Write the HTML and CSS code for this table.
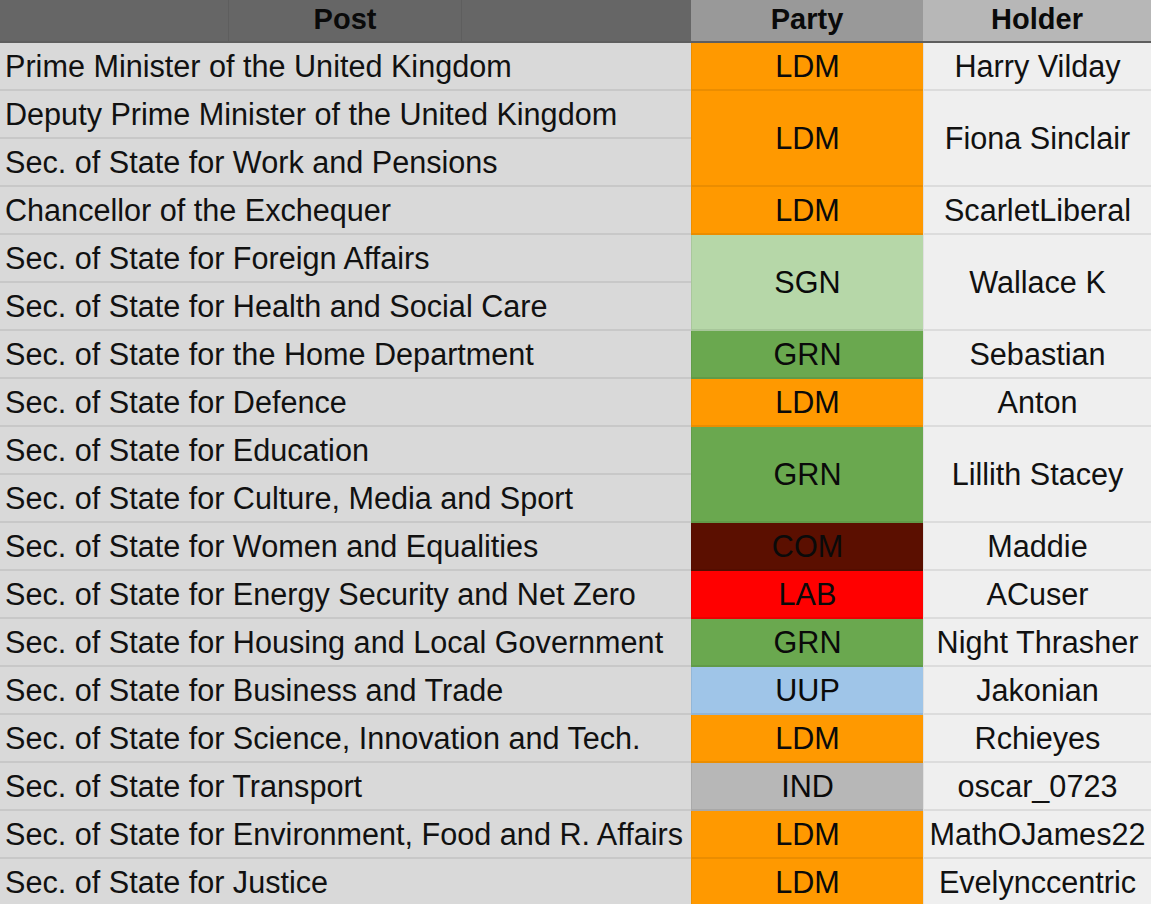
FILE: index.html
```html
<!DOCTYPE html>
<html lang="en">
<head>
<meta charset="utf-8">
<title>Cabinet</title>
<link rel="stylesheet" href="styles.css">
</head>
<body>
<div class="sheet">
  <div class="hd hd-post"><span class="sub"></span><span class="sub mid">Post</span><span class="sub"></span></div>
  <div class="hd hd-party">Party</div>
  <div class="hd hd-holder">Holder</div>

  <div class="post">Prime Minister of the United Kingdom</div>
  <div class="party ldm">LDM</div>
  <div class="holder">Harry Vilday</div>

  <div class="post">Deputy Prime Minister of the United Kingdom</div>
  <div class="party ldm span2">LDM</div>
  <div class="holder span2">Fiona Sinclair</div>
  <div class="post">Sec. of State for Work and Pensions</div>

  <div class="post">Chancellor of the Exchequer</div>
  <div class="party ldm">LDM</div>
  <div class="holder">ScarletLiberal</div>

  <div class="post">Sec. of State for Foreign Affairs</div>
  <div class="party sgn span2">SGN</div>
  <div class="holder span2">Wallace K</div>
  <div class="post">Sec. of State for Health and Social Care</div>

  <div class="post">Sec. of State for the Home Department</div>
  <div class="party grn">GRN</div>
  <div class="holder">Sebastian</div>

  <div class="post">Sec. of State for Defence</div>
  <div class="party ldm">LDM</div>
  <div class="holder">Anton</div>

  <div class="post">Sec. of State for Education</div>
  <div class="party grn span2">GRN</div>
  <div class="holder span2">Lillith Stacey</div>
  <div class="post">Sec. of State for Culture, Media and Sport</div>

  <div class="post">Sec. of State for Women and Equalities</div>
  <div class="party com">COM</div>
  <div class="holder">Maddie</div>

  <div class="post">Sec. of State for Energy Security and Net Zero</div>
  <div class="party lab">LAB</div>
  <div class="holder">ACuser</div>

  <div class="post">Sec. of State for Housing and Local Government</div>
  <div class="party grn">GRN</div>
  <div class="holder">Night Thrasher</div>

  <div class="post">Sec. of State for Business and Trade</div>
  <div class="party uup">UUP</div>
  <div class="holder">Jakonian</div>

  <div class="post">Sec. of State for Science, Innovation and Tech.</div>
  <div class="party ldm">LDM</div>
  <div class="holder">Rchieyes</div>

  <div class="post">Sec. of State for Transport</div>
  <div class="party ind">IND</div>
  <div class="holder">oscar_0723</div>

  <div class="post">Sec. of State for Environment, Food and R. Affairs</div>
  <div class="party ldm">LDM</div>
  <div class="holder">MathOJames22</div>

  <div class="post">Sec. of State for Justice</div>
  <div class="party ldm">LDM</div>
  <div class="holder">Evelynccentric</div>
</div>
</body>
</html>
```

FILE: styles.css
```css
html, body {
  margin: 0;
  padding: 0;
  background: #efefef;
  overflow: hidden;
}

.sheet {
  display: grid;
  grid-template-columns: 691px 232px 228px;
  grid-template-rows: 43px;
  grid-auto-rows: 48px;
  width: 1151px;
  font-family: "Liberation Sans", Arial, sans-serif;
  font-size: 30.6px;
  color: #111;
}

.hd {
  display: flex;
  align-items: center;
  justify-content: center;
  font-weight: bold;
  font-size: 29px;
  border-bottom: 2px solid #5e5e5e;
  box-sizing: border-box;
  color: #0a0a0a;
  padding-bottom: 2px;
}

.hd-post {
  background: #666666;
  justify-content: flex-start;
  align-items: stretch;
  padding-bottom: 0;
}

.sub {
  display: flex;
  align-items: center;
  justify-content: center;
  width: 228px;
  border-right: 1px solid #5e5e5e;
  padding-bottom: 2px;
}

.sub.mid {
  width: 232px;
}

.sub:last-child {
  border-right: none;
  flex: 1;
}

.hd-party {
  background: #999999;
}

.hd-holder {
  background: #b7b7b7;
}

.post,
.party,
.holder {
  display: flex;
  align-items: center;
  box-sizing: border-box;
  border-bottom: 2px solid rgba(0, 0, 0, 0.075);
  white-space: nowrap;
}

.post {
  grid-column: 1;
  background: #d9d9d9;
  padding-left: 5px;
}

.party {
  grid-column: 2;
  justify-content: center;
  border-left: 1px solid rgba(0, 0, 0, 0.07);
  color: #0a0a0a;
}

.holder {
  grid-column: 3;
  justify-content: center;
  background: #efefef;
  border-left: 1px solid rgba(0, 0, 0, 0.06);
}

.span2 {
  grid-row: span 2;
}

.ldm { background: #ff9900; }
.sgn { background: #b6d7a8; }
.grn { background: #6aa84f; }
.com { background: #5b0f00; }
.lab { background: #ff0000; }
.uup { background: #9fc5e8; }
.ind { background: #b7b7b7; }
```
